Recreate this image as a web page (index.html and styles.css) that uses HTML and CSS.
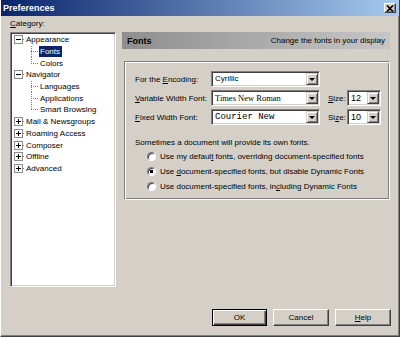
FILE: index.html
```html
<!DOCTYPE html>
<html lang="en">
<head>
    <meta charset="UTF-8">
    <title>Preferences</title>
    <link rel="stylesheet" href="styles.css">
</head>
<body>

    <div class="window">
        <!-- Title bar -->
        <div class="titlebar">
            <span class="title">Preferences</span>
            <span class="close-btn">
                <svg width="8" height="7" viewBox="0 0 8 7"><path d="M1 0.5 L7 6.5 M7 0.5 L1 6.5" stroke="#000" stroke-width="1.6"/></svg>
            </span>
        </div>

        <div class="main">
            <!-- Category tree -->
            <div class="sidebar">
                <div class="field-label"><u>C</u>ategory:</div>
                <div class="tree">
                    <div class="node"><span class="expander minus"></span><span class="hline"></span><span class="node-text">Appearance</span></div>
                    <div class="child"><span class="elbow"></span><span class="node-text selected">Fonts</span></div>
                    <div class="child last"><span class="elbow"></span><span class="node-text">Colors</span></div>
                    <div class="node"><span class="expander minus"></span><span class="hline"></span><span class="node-text">Navigator</span></div>
                    <div class="child"><span class="elbow"></span><span class="node-text">Languages</span></div>
                    <div class="child"><span class="elbow"></span><span class="node-text">Applications</span></div>
                    <div class="child last"><span class="elbow"></span><span class="node-text">Smart Browsing</span></div>
                    <div class="node"><span class="expander plus"></span><span class="hline"></span><span class="node-text">Mail &amp; Newsgroups</span></div>
                    <div class="node"><span class="expander plus"></span><span class="hline"></span><span class="node-text">Roaming Access</span></div>
                    <div class="node"><span class="expander plus"></span><span class="hline"></span><span class="node-text">Composer</span></div>
                    <div class="node"><span class="expander plus"></span><span class="hline"></span><span class="node-text">Offline</span></div>
                    <div class="node"><span class="expander plus"></span><span class="hline"></span><span class="node-text">Advanced</span></div>
                </div>
            </div>

            <!-- Fonts panel -->
            <div class="content">
                <div class="panel-header">
                    <span class="panel-title">Fonts</span>
                    <span>Change the fonts in your display</span>
                </div>

                <div class="groupbox">
                    <div class="font-grid">
                        <span>For the <u>E</u>ncoding:</span>
                        <div class="select"><span class="select-value">Cyrillic</span><span class="select-arrow"></span></div>
                        <span></span>
                        <span></span>

                        <span><u>V</u>ariable Width Font:</span>
                        <div class="select"><span class="select-value serif">Times New Roman</span><span class="select-arrow"></span></div>
                        <span class="size-label"><u>S</u>ize:</span>
                        <div class="select"><span class="select-value size">12</span><span class="select-arrow"></span></div>

                        <span><u>F</u>ixed Width Font:</span>
                        <div class="select"><span class="select-value mono">Courier New</span><span class="select-arrow"></span></div>
                        <span class="size-label">Si<u>z</u>e:</span>
                        <div class="select"><span class="select-value size">10</span><span class="select-arrow"></span></div>
                    </div>

                    <p class="note">Sometimes a document will provide its own fonts.</p>

                    <div class="radio-list">
                        <div class="radio-row"><span class="radio"></span><span>Use my defaul<u>t</u> fonts, overriding document-specified fonts</span></div>
                        <div class="radio-row"><span class="radio checked"></span><span>Use <u>d</u>ocument-specified fonts, but disable Dynamic Fonts</span></div>
                        <div class="radio-row"><span class="radio"></span><span>Use document-specified fonts, in<u>c</u>luding Dynamic Fonts</span></div>
                    </div>
                </div>
            </div>
        </div>

        <!-- Dialog buttons -->
        <div class="buttons">
            <button class="btn default ok">OK</button>
            <button class="btn">Cancel</button>
            <button class="btn"><u>H</u>elp</button>
        </div>
    </div>

</body>
</html>
```

FILE: styles.css
```css
body {
    margin: 0;
    font-family: "Liberation Sans", Arial, sans-serif;
    font-size: 8px;
    color: #000;
}
.window {
    width: 400px;
    height: 337px;
    box-sizing: border-box;
    background-color: #d4d0c8;
    border-left: 1px solid #fff;
    border-right: 1px solid #404040;
    border-bottom: 1px solid #404040;
    box-shadow: inset -1px -1px #808080;
}
.titlebar {
    height: 16px;
    background: linear-gradient(to right, #0a246a, #a6caf0);
    display: flex;
    align-items: center;
    justify-content: space-between;
    padding: 0 3px 0 2px;
}
.title {
    color: #fff;
    font-weight: bold;
    font-size: 9px;
}
.close-btn {
    width: 12px;
    height: 10px;
    box-sizing: border-box;
    background-color: #d4d0c8;
    border: 1px solid;
    border-color: #fff #404040 #404040 #fff;
    box-shadow: inset -1px -1px #808080;
    display: flex;
    align-items: center;
    justify-content: center;
}
.main {
    display: flex;
    gap: 6px;
    padding: 0 9px;
}
.sidebar {
    width: 106px;
}
.field-label {
    margin-top: 3px;
    line-height: 10px;
}
.tree {
    margin-top: 3px;
    height: 255px;
    box-sizing: border-box;
    background-color: #fff;
    border: 1px solid;
    border-color: #808080 #fff #fff #808080;
    box-shadow: inset 1px 1px #404040, inset -1px -1px #d4d0c8;
    padding: 1px 2px 0 2px;
}
.node,
.child {
    height: 11.7px;
    display: flex;
    align-items: center;
    white-space: nowrap;
}
.node {
    padding-left: 1px;
}
.child {
    padding-left: 18px;
    align-items: stretch;
}
.expander {
    width: 9px;
    height: 9px;
    box-sizing: border-box;
    border: 1px solid #8c8c8c;
    background: linear-gradient(#000, #000) center / 5px 1px no-repeat, #fff;
}
.expander.plus {
    background: linear-gradient(#000, #000) center / 5px 1px no-repeat,
                linear-gradient(#000, #000) center / 1px 5px no-repeat, #fff;
}
.hline {
    width: 2px;
    height: 1px;
    background: repeating-linear-gradient(to right, #808080 0 1px, transparent 1px 2px);
}
.elbow {
    width: 7px;
    background: repeating-linear-gradient(to bottom, #808080 0 1px, transparent 1px 2px) left top / 1px 100% no-repeat,
                repeating-linear-gradient(to right, #808080 0 1px, transparent 1px 2px) left center / 100% 1px no-repeat;
}
.child.last .elbow {
    background: repeating-linear-gradient(to bottom, #808080 0 1px, transparent 1px 2px) left top / 1px 50% no-repeat,
                repeating-linear-gradient(to right, #808080 0 1px, transparent 1px 2px) left center / 100% 1px no-repeat;
}
.child .node-text {
    margin-left: 1px;
    align-self: center;
}
.node-text {
    padding: 0 1px;
    line-height: 11px;
}
.node-text.selected {
    background-color: #0a246a;
    color: #fff;
    padding-right: 2px;
}
.content {
    width: 268px;
}
.panel-header {
    margin-top: 16px;
    height: 17px;
    background: linear-gradient(to right, #8e8e8e, #c6c6c6);
    display: flex;
    align-items: center;
    justify-content: space-between;
    padding: 0 5px;
    box-sizing: border-box;
}
.panel-title {
    font-weight: bold;
    font-size: 9px;
}
.groupbox {
    margin: 12px 0 0 2px;
    height: 139px;
    box-sizing: border-box;
    border: 1px solid;
    border-color: #808080 #fff #fff #808080;
    box-shadow: inset 1px 1px #fff, inset -1px -1px #808080;
    padding: 9px 0 0 10px;
}
.font-grid {
    display: grid;
    grid-template-columns: 76px 109px 27px 34px;
    grid-auto-rows: 16px;
    row-gap: 3px;
    align-items: center;
}
.size-label {
    padding-left: 8px;
}
.select {
    height: 16px;
    box-sizing: border-box;
    display: flex;
    background-color: #fff;
    border: 1px solid;
    border-color: #808080 #fff #fff #808080;
    box-shadow: inset 1px 1px #404040, inset -1px -1px #d4d0c8;
    padding: 1px;
}
.select-value {
    flex: 1;
    padding-left: 2px;
    line-height: 12px;
    white-space: nowrap;
    overflow: hidden;
}
.select-value.serif {
    font-family: "Liberation Serif", "Times New Roman", serif;
    font-size: 8.5px;
}
.select-value.mono {
    font-family: "Liberation Mono", "Courier New", monospace;
    font-size: 9px;
}
.select-value.size {
    font-size: 9px;
}
.select-arrow {
    width: 12px;
    box-sizing: border-box;
    background-color: #d4d0c8;
    border: 1px solid;
    border-color: #d4d0c8 #404040 #404040 #d4d0c8;
    box-shadow: inset 1px 1px #fff, inset -1px -1px #808080;
    display: flex;
    align-items: center;
    justify-content: center;
}
.select-arrow::after {
    content: "";
    border-left: 3px solid transparent;
    border-right: 3px solid transparent;
    border-top: 3px solid #000;
}
.note {
    margin: 13px 0 0 0;
    line-height: 10px;
}
.radio-list {
    margin-top: 1px;
    padding-left: 12px;
}
.radio-row {
    height: 15px;
    display: flex;
    align-items: center;
    white-space: nowrap;
}
.radio {
    width: 9px;
    height: 9px;
    box-sizing: border-box;
    border-radius: 50%;
    border: 1px solid;
    border-color: #808080 #fff #fff #808080;
    box-shadow: inset 1px 1px #404040;
    background-color: #fff;
    margin-right: 4px;
}
.radio.checked {
    background: radial-gradient(circle, #000 0 1.6px, #fff 1.8px);
}
.buttons {
    display: flex;
    justify-content: flex-end;
    gap: 6px;
    margin-top: 22px;
    padding-right: 8px;
}
.btn {
    width: 56px;
    height: 17px;
    box-sizing: border-box;
    background-color: #d4d0c8;
    border: 1px solid;
    border-color: #fff #404040 #404040 #fff;
    box-shadow: inset -1px -1px #808080;
    font-family: "Liberation Sans", Arial, sans-serif;
    font-size: 8px;
    padding: 0;
    color: #000;
}
.btn.ok {
    width: 55px;
}
.btn.default {
    border: 1px solid #000;
    box-shadow: inset 1px 1px #fff, inset -1px -1px #404040, inset -2px -2px #808080;
}
```
